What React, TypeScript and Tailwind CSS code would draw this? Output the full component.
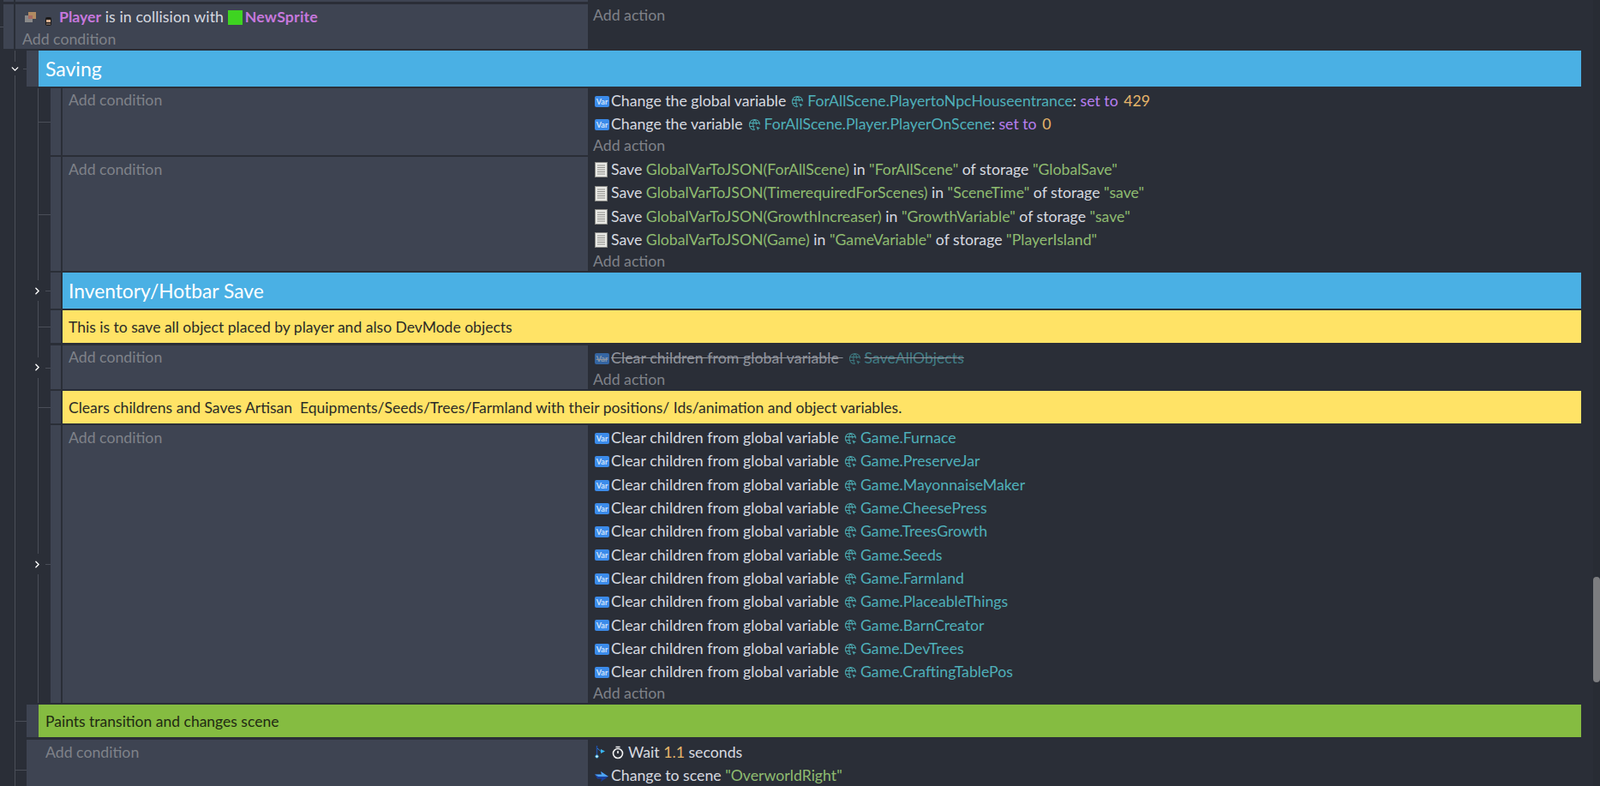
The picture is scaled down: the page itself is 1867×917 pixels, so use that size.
import React from "react";
import { ChevronDown, ChevronRight } from "lucide-react";

const VarIcon = () => (
  <span className="mr-[2px] flex h-[13px] w-[17px] shrink-0 items-center justify-center rounded-[2px] bg-[#3b8bea] font-['Liberation_Serif',serif] text-[9px] leading-none font-bold text-[#cfe2fb]">
    Var
  </span>
);

const GlobeIcon = () => (
  <svg viewBox="0 0 16 16" className="mr-[4px] ml-[6px] h-[15px] w-[15px] shrink-0" fill="none" stroke="#4aa6ad" strokeWidth="1.1">
    <path d="M8 14.5A6.5 6.5 0 1 1 14.5 8" />
    <path d="M8 1.5C5.5 4 5.5 11.500 8 14.500M8 1.500C10 3.500 10.500 6 10.300 8M1.800 6h12M1.800 10.200h6" />
    <path d="M10 10l5 2-2 1-1 2z" fill="#4aa6ad" stroke="none" />
  </svg>
);

const SaveIcon = () => (
  <svg viewBox="0 0 15 18" className="mr-[4px] h-[18px] w-[15px] shrink-0">
    <rect x="0.500" y="0.500" width="14" height="17" fill="#e8e8e4" stroke="#8a8a86" />
    <path d="M3 4h9M3 6.500h9M3 9h9M3 11.500h9M3 14h9" stroke="#8f8f8b" strokeWidth="1" />
  </svg>
);

const Muted = ({ children, cls = "" }: { children: React.ReactNode; cls?: string }) => (
  <div className={`text-[#7f8289] ${cls}`}>{children}</div>
);

const Line = ({ children, cls = "h-[27.2px]" }: { children: React.ReactNode; cls?: string }) => (
  <div className={`flex items-center whitespace-pre ${cls}`}>{children}</div>
);

const Teal = ({ children }: { children: React.ReactNode }) => <span className="text-[#4fb0ba]">{children}</span>;
const Str = ({ children }: { children: React.ReactNode }) => <span className="text-[#8fbc70]">{children}</span>;

const Handle = ({ cls = "w-[12px] mr-[2px]" }: { cls?: string }) => <div className={`shrink-0 bg-[#3e4452] ${cls}`} />;

const Chev = () => (
  <div className="absolute top-1/2 left-[-25px] flex h-[24px] w-[19px] -translate-y-1/2 items-center justify-center bg-[#2a2e37]">
    <ChevronRight size={13} strokeWidth={2.5} className="text-white" />
  </div>
);

const Cond = ({ actions, chev, cls = "" }: { actions: React.ReactNode; chev?: boolean; cls?: string }) => (
  <div className={`relative flex ${cls}`}>
    <div className="absolute top-1/2 left-[-14px] h-px w-[14px] bg-[#4a4e58]" />
    {chev && <Chev />}
    <Handle />
    <div className="w-[613px] shrink-0 bg-[#3e4452] px-[7px] pt-[1px]">
      <Muted cls="flex h-[27.2px] items-center">Add condition</Muted>
    </div>
    <div className="flex-1 pt-[1.5px] pl-[8px]">
      {actions}
      <Muted cls="ml-[-2px] flex h-[22.5px] items-center">Add action</Muted>
    </div>
  </div>
);

const Banner = ({ title, cls, chev, big }: { title: string; cls: string; chev?: boolean; big?: boolean }) => (
  <div className="relative flex">
    <div className="absolute top-1/2 left-[-14px] h-px w-[14px] bg-[#4a4e58]" />
    {chev && <Chev />}
    <Handle />
    <div
      className={`flex flex-1 items-center px-[7px] ${cls} ${
        big ? "h-[42px] text-[22.8px] text-white" : "h-[38px] pt-[2px] text-[17.55px] text-[#2b2b26]"
      }`}
    >
      {title}
    </div>
  </div>
);

const saves: [string, string, string][] = [
  ["ForAllScene", "ForAllScene", "GlobalSave"],
  ["TimerequiredForScenes", "SceneTime", "save"],
  ["GrowthIncreaser", "GrowthVariable", "save"],
  ["Game", "GameVariable", "PlayerIsland"],
];

const clears = [
  "Furnace",
  "PreserveJar",
  "MayonnaiseMaker",
  "CheesePress",
  "TreesGrowth",
  "Seeds",
  "Farmland",
  "PlaceableThings",
  "BarnCreator",
  "DevTrees",
  "CraftingTablePos",
];

export default function App() {
  return (
    <div className="relative h-[917px] w-[1867px] overflow-hidden bg-[#2a2e37] pr-[22px] font-[Lato,sans-serif] text-[17.7px] text-[#d7dae0]">
      <div className="absolute top-[31px] left-0 h-px w-[4px] bg-[#4a4e58]" />
      <div className="absolute top-0 right-0 h-full w-[8px] bg-[#282c34]" />
      <div className="absolute top-[673px] right-0 h-[123px] w-[8px] rounded-[4px] bg-[#7c7d80]" />

      <div className="flex h-[2px] pl-[4px]">
        <Handle cls="mr-[2px] w-[12px]" />
        <div className="w-[668px] bg-[#3e4452]" />
      </div>
      <div className="mt-[3px] flex pl-[4px]">
        <Handle cls="mr-[2px] w-[12px]" />
        <div className="h-[52px] w-[668px] shrink-0 bg-[#3e4452] pt-[2px] pl-[11px]">
          <div className="flex h-[26px] items-center whitespace-pre">
            <svg viewBox="0 0 14 13" className="h-[13px] w-[14px] shrink-0">
              <rect x="4" y="0" width="9" height="8" fill="#b08a62" />
              <rect x="0" y="4" width="9" height="8" fill="#8a8a8a" />
              <rect x="4" y="4" width="5" height="4" fill="#a76a62" />
            </svg>
            <svg viewBox="0 0 9 10" className="mt-[10px] ml-[9px] h-[10px] w-[9px] shrink-0">
              <rect x="1" y="0" width="7" height="10" rx="2" fill="#1d1b1b" />
              <rect x="2" y="3" width="5" height="3" fill="#d8b090" />
              <rect x="2" y="7" width="5" height="2" fill="#6b5a50" />
            </svg>
            <span className="ml-[8px] font-bold text-[#c678dd]">Player</span>
            <span className="tracking-[0.1px]"> is in collision with </span>
            <span className="mr-[3px] h-[17px] w-[17px] bg-[#3ed421]" />
            <span className="font-bold tracking-[0.2px] text-[#c678dd]">NewSprite</span>
          </div>
          <Muted cls="ml-[-3px] flex h-[26px] items-center pt-[1px]">Add condition</Muted>
        </div>
        <Muted cls="flex h-[26px] items-center pl-[6px]">Add action</Muted>
      </div>

      <div className="mt-[2px] ml-[17px] flex flex-col gap-[2px] border-l border-[#4a4e58] pl-[13px]">
        <div className="relative flex">
          <div className="absolute top-1/2 left-[-4px] h-px w-[4px] bg-[#4a4e58]" />
          <div className="absolute top-1/2 left-[-22px] flex h-[16px] w-[17px] -translate-y-1/2 items-center justify-center bg-[#2a2e37]">
            <ChevronDown size={13} strokeWidth={2.5} className="text-white" />
          </div>
          <Handle cls="w-[14px]" />
          <div className="flex h-[42px] flex-1 items-center bg-[#4ab0e4] pl-[8px] text-[23px] text-white">Saving</div>
        </div>

        <div className="ml-[13px] flex flex-col gap-[2px] border-l border-[#4a4e58] pl-[14px]">
          <Cond
            actions={
              <>
                <Line>
                  <VarIcon />
                  <span>Change the global variable</span>
                  <GlobeIcon />
                  <Teal>ForAllScene.PlayertoNpcHouseentrance</Teal>
                  <span>: </span>
                  <span className="mr-[2px] text-[#b77ff0]">set to </span>
                  <span className="text-[#e5b56a]">429</span>
                </Line>
                <Line>
                  <VarIcon />
                  <span>Change the variable</span>
                  <GlobeIcon />
                  <Teal>ForAllScene.Player.PlayerOnScene</Teal>
                  <span>: </span>
                  <span className="mr-[2px] text-[#b77ff0]">set to </span>
                  <span className="text-[#e5b56a]">0</span>
                </Line>
              </>
            }
          />
          <Cond
            actions={saves.map(([v, k, s]) => (
              <Line key={v}>
                <SaveIcon />
                <span>Save </span>
                <Str>GlobalVarToJSON({v})</Str>
                <span> in </span>
                <Str>"{k}"</Str>
                <span> of storage </span>
                <Str>"{s}"</Str>
              </Line>
            ))}
          />
          <Banner title="Inventory/Hotbar Save" big chev cls="bg-[#4ab0e4]" />
          <Banner title="This is to save all object placed by player and also DevMode objects" cls="bg-[#ffe366]" />
          <Cond
            chev
            cls="mt-[1px]"
            actions={
              <Line cls="h-[27.2px] line-through opacity-60">
                <VarIcon />
                <span className="tracking-[0.07px]">Clear children from global variable </span>
                <GlobeIcon />
                <Teal>SaveAllObjects</Teal>
              </Line>
            }
          />
          <Banner
            title="Clears childrens and Saves Artisan  Equipments/Seeds/Trees/Farmland with their positions/ Ids/animation and object variables."
            cls="whitespace-pre bg-[#ffe366]"
          />
          <Cond
            chev
            cls="h-[324px]"
            actions={clears.map((c) => (
              <Line key={c} cls="h-[27.3px]">
                <VarIcon />
                <span className="tracking-[0.07px]">Clear children from global variable</span>
                <GlobeIcon />
                <Teal>Game.{c}</Teal>
              </Line>
            ))}
          />
        </div>

        <div className="relative flex">
          <div className="absolute top-1/2 left-[-13px] h-px w-[13px] bg-[#4a4e58]" />
          <Handle cls="w-[14px]" />
          <div className="flex h-[38px] flex-1 items-center bg-[#85bc41] pt-[1px] pl-[8px] text-[17.5px] text-[#1f2a12]">
            Paints transition and changes scene
          </div>
        </div>

        <div className="relative mt-[1px] flex">
          <div className="absolute top-1/2 left-[-13px] h-px w-[13px] bg-[#4a4e58]" />
          <Handle cls="w-[14px]" />
          <div className="h-[70px] w-[641px] shrink-0 bg-[#3e4452] pt-[1.5px] pl-[8px]">
            <Muted cls="flex h-[27.2px] items-center">Add condition</Muted>
          </div>
          <div className="pt-[1.5px] pl-[8px]">
            <Line>
              <svg viewBox="0 0 14 16" className="h-[16px] w-[14px] shrink-0" fill="none">
                <path d="M2.500 0v11" stroke="#1e4fa8" strokeWidth="1.400" />
                <path d="M7 4l5 2.500-5 2.500z" fill="#39b6f0" />
                <path d="M3 3l4 3.500" stroke="#2f80d8" strokeWidth="1" />
                <circle cx="2.500" cy="12.500" r="1.600" fill="#eaf8ff" stroke="#39b6f0" strokeWidth="1" />
              </svg>
              <svg viewBox="0 0 14 16" className="ml-[6px] h-[16px] w-[14px] shrink-0" fill="none" stroke="#f2f2f2" strokeWidth="1.6">
                <circle cx="7" cy="9" r="5.500" />
                <path d="M7 6v3M4.500 1.500h5" />
              </svg>
              <span className="ml-[5px]">Wait </span>
              <span className="text-[#e5b56a]">1.1</span>
              <span> seconds</span>
            </Line>
            <Line>
              <svg viewBox="0 0 16 12" className="mr-[3px] h-[12px] w-[16px] shrink-0">
                <path d="M0 3.500h8L7 0l9 6-9 6 1-3.500H3z" fill="#1a3f9c" />
                <path d="M0 3.500h8L7 0l9 6H4z" fill="#4ea4f0" />
              </svg>
              <span>Change to scene </span>
              <Str>"OverworldRight"</Str>
            </Line>
          </div>
        </div>
      </div>
    </div>
  );
}
